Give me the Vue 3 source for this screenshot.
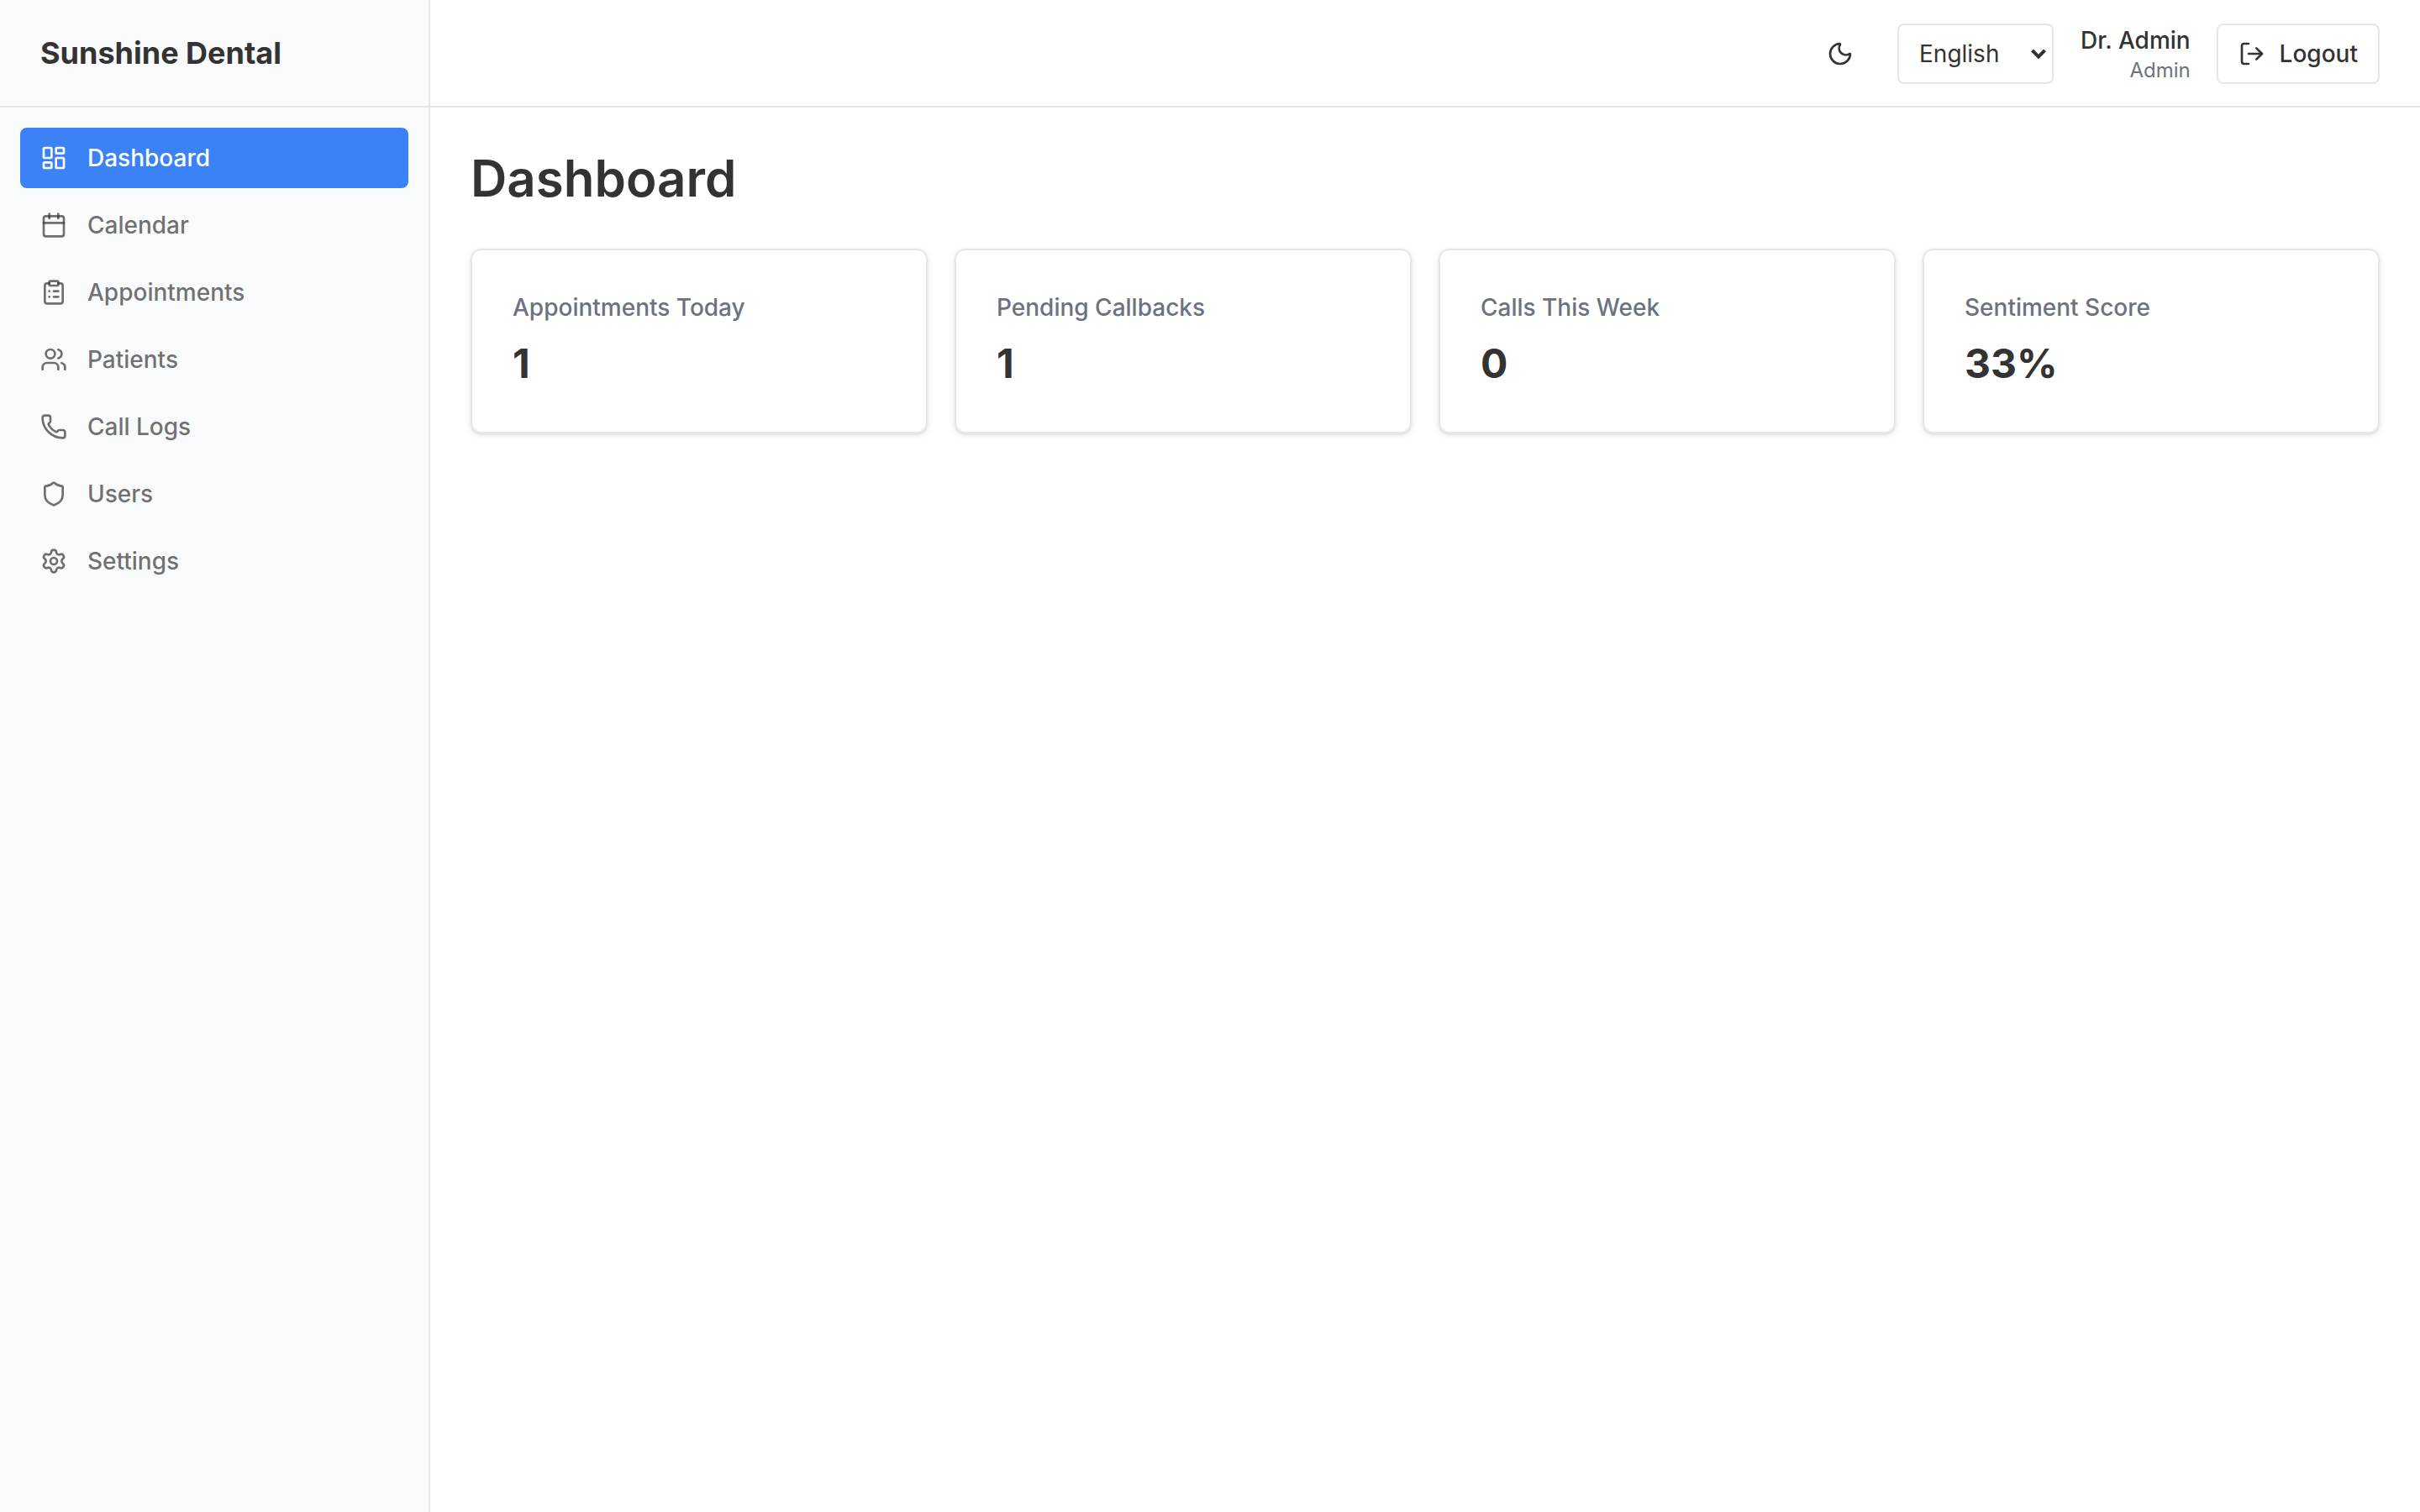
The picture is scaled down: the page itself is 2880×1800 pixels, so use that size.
<template>
  <div class="layout">
    <aside class="sidebar">
      <div class="brand">
        <span>{{ clinicName }}</span>
      </div>
      <nav class="nav">
        <a
          v-for="item in navItems"
          :key="item.label"
          class="nav-item"
          :class="{ active: item.label === current }"
          @click="current = item.label"
        >
          <svg class="icon" viewBox="0 0 24 24">
            <rect v-for="(r, i) in item.rects" :key="'r' + i" v-bind="r" />
            <circle v-for="(c, i) in item.circles" :key="'c' + i" v-bind="c" />
            <path v-for="d in item.paths" :key="d" :d="d" />
          </svg>
          <span>{{ item.label }}</span>
        </a>
      </nav>
    </aside>

    <div class="content">
      <header class="topbar">
        <button class="theme-btn" aria-label="Toggle theme">
          <svg class="icon" viewBox="0 0 24 24">
            <path d="M20.985 12.486a9 9 0 1 1-9.473-9.472c.405-.022.617.46.402.803a6 6 0 0 0 8.268 8.268c.344-.215.825-.004.803.401" />
          </svg>
        </button>
        <div class="select-wrap">
          <select v-model="language" class="select">
            <option v-for="lang in languages" :key="lang">{{ lang }}</option>
          </select>
          <svg class="chevron" viewBox="0 0 20 14">
            <path d="M2.5 1.9 10 9.6l7.5-7.7" />
          </svg>
        </div>
        <div class="user">
          <div class="user-name">{{ user.name }}</div>
          <div class="user-role">{{ user.role }}</div>
        </div>
        <button class="logout-btn">
          <svg class="icon" viewBox="0 0 24 24">
            <path d="m16 17 5-5-5-5" />
            <path d="M21 12H9" />
            <path d="M9 21H5a2 2 0 0 1-2-2V5a2 2 0 0 1 2-2h4" />
          </svg>
          Logout
        </button>
      </header>

      <main class="main">
        <h1>Dashboard</h1>
        <div class="stats">
          <div v-for="stat in stats" :key="stat.label" class="card">
            <div class="card-label">{{ stat.label }}</div>
            <div class="card-value">{{ stat.value }}</div>
          </div>
        </div>
      </main>
    </div>
  </div>
</template>

<script setup>
import { ref } from 'vue';

const clinicName = 'Sunshine Dental';
const current = ref('Dashboard');
const language = ref('English');
const languages = ['English'];
const user = { name: 'Dr. Admin', role: 'Admin' };

const navItems = [
  {
    label: 'Dashboard',
    rects: [
      { width: 7, height: 9, x: 3, y: 3, rx: 1 },
      { width: 7, height: 5, x: 14, y: 3, rx: 1 },
      { width: 7, height: 9, x: 14, y: 12, rx: 1 },
      { width: 7, height: 5, x: 3, y: 16, rx: 1 }
    ]
  },
  {
    label: 'Calendar',
    rects: [{ width: 18, height: 18, x: 3, y: 4, rx: 2 }],
    paths: ['M8 2v4', 'M16 2v4', 'M3 10h18']
  },
  {
    label: 'Appointments',
    rects: [{ width: 8, height: 4, x: 8, y: 2, rx: 1 }],
    paths: [
      'M16 4h2a2 2 0 0 1 2 2v14a2 2 0 0 1-2 2H6a2 2 0 0 1-2-2V6a2 2 0 0 1 2-2h2',
      'M12 11h4',
      'M12 16h4',
      'M8 11h.01',
      'M8 16h.01'
    ]
  },
  {
    label: 'Patients',
    circles: [{ cx: 9, cy: 7, r: 4 }],
    paths: [
      'M16 21v-2a4 4 0 0 0-4-4H6a4 4 0 0 0-4 4v2',
      'M16 3.128a4 4 0 0 1 0 7.744',
      'M22 21v-2a4 4 0 0 0-3-3.87'
    ]
  },
  {
    label: 'Call Logs',
    paths: [
      'M13.832 16.568a1 1 0 0 0 1.213-.303l.355-.465A2 2 0 0 1 17 15h3a2 2 0 0 1 2 2v3a2 2 0 0 1-2 2A18 18 0 0 1 2 4a2 2 0 0 1 2-2h3a2 2 0 0 1 2 2v3a2 2 0 0 1-.8 1.6l-.468.351a1 1 0 0 0-.292 1.233 14 14 0 0 0 6.392 6.384'
    ]
  },
  {
    label: 'Users',
    paths: [
      'M20 13c0 5-3.5 7.5-7.66 8.95a1 1 0 0 1-.67-.01C7.5 20.5 4 18 4 13V6a1 1 0 0 1 1-1c2 0 4.5-1.2 6.24-2.72a1.17 1.17 0 0 1 1.52 0C14.51 3.81 17 5 19 5a1 1 0 0 1 1 1z'
    ]
  },
  {
    label: 'Settings',
    circles: [{ cx: 12, cy: 12, r: 3 }],
    paths: [
      'M9.671 4.136a2.34 2.34 0 0 1 4.659 0 2.34 2.34 0 0 0 3.319 1.915 2.34 2.34 0 0 1 2.33 4.033 2.34 2.34 0 0 0 0 3.831 2.34 2.34 0 0 1-2.33 4.033 2.34 2.34 0 0 0-3.319 1.915 2.34 2.34 0 0 1-4.659 0 2.34 2.34 0 0 0-3.32-1.915 2.34 2.34 0 0 1-2.33-4.033 2.34 2.34 0 0 0 0-3.831A2.34 2.34 0 0 1 6.35 6.051a2.34 2.34 0 0 0 3.319-1.915'
    ]
  }
];

const stats = [
  { label: 'Appointments Today', value: '1' },
  { label: 'Pending Callbacks', value: '1' },
  { label: 'Calls This Week', value: '0' },
  { label: 'Sentiment Score', value: '33%' }
];
</script>

<style>
body {
  margin: 0;
  background: #fff;
}
</style>

<style scoped>
* {
  box-sizing: border-box;
}

.layout {
  display: flex;
  height: 100vh;
  font-family: Inter, "Liberation Sans", sans-serif;
  font-size: 28px;
  line-height: 40px;
  color: #333;
  background: #fff;
}

.icon {
  width: 32px;
  height: 32px;
  flex-shrink: 0;
  fill: none;
  stroke: currentColor;
  stroke-width: 2;
  stroke-linecap: round;
  stroke-linejoin: round;
}

.sidebar {
  width: 512px;
  flex-shrink: 0;
  background: #f9fafc;
  border-right: 2px solid #e5e6eb;
}

.brand {
  display: flex;
  align-items: center;
  height: 128px;
  padding: 0 48px;
  border-bottom: 2px solid #e5e6eb;
  font-size: 36px;
  font-weight: 700;
  line-height: 56px;
}

.nav {
  display: flex;
  flex-direction: column;
  gap: 8px;
  padding: 24px;
}

.nav-item {
  display: flex;
  align-items: center;
  gap: 24px;
  height: 72px;
  padding: 0 24px;
  border-radius: 8px;
  font-weight: 500;
  color: rgba(51, 51, 51, 0.7);
  cursor: pointer;
}

.nav-item.active {
  background: #3b82f6;
  color: #fff;
}

.content {
  flex: 1;
  min-width: 0;
}

.topbar {
  display: flex;
  align-items: center;
  justify-content: flex-end;
  gap: 32px;
  height: 128px;
  padding: 2px 48px 0;
  border-bottom: 2px solid #e5e6eb;
}

button,
select {
  font-family: inherit;
  font-size: 28px;
  line-height: 40px;
  color: inherit;
  background: transparent;
  margin: 0;
}

.theme-btn {
  display: flex;
  align-items: center;
  justify-content: center;
  width: 72px;
  height: 72px;
  padding: 0;
  border: none;
}

.select-wrap {
  position: relative;
}

.select {
  display: block;
  appearance: none;
  width: 186px;
  height: 72px;
  padding: 0 24px;
  border: 2px solid #e5e6eb;
  border-radius: 8px;
  background: #fff;
}

.chevron {
  position: absolute;
  right: 8px;
  top: 30px;
  width: 20px;
  height: 14px;
  fill: none;
  stroke: currentColor;
  stroke-width: 4.2;
}

.user {
  text-align: right;
}

.user-name {
  font-weight: 500;
}

.user-role {
  font-size: 24px;
  line-height: 32px;
  color: #6b7280;
}

.logout-btn {
  display: flex;
  align-items: center;
  gap: 16.6px;
  width: 194px;
  height: 72px;
  margin-left: -0.7px;
  padding: 0 22px 0 24px;
  border: 2px solid #e5e6eb;
  border-radius: 8px;
  font-weight: 500;
}

.main {
  padding: 48px;
}

h1 {
  margin: 0 0 48px;
  font-size: 60px;
  font-weight: 600;
  line-height: 72px;
}

.stats {
  display: grid;
  grid-template-columns: repeat(4, 1fr);
  gap: 32px;
}

.card {
  height: 220px;
  padding: 48px;
  border: 2px solid #e5e6eb;
  border-radius: 12px;
  background: #fff;
  box-shadow: 0 2px 6px rgba(0, 0, 0, 0.1), 0 2px 4px -2px rgba(0, 0, 0, 0.1);
}

.card-label {
  font-weight: 500;
  color: #6b7280;
}

.card-value {
  margin-top: 15px;
  font-size: 48px;
  font-weight: 700;
  line-height: 64px;
}
</style>
